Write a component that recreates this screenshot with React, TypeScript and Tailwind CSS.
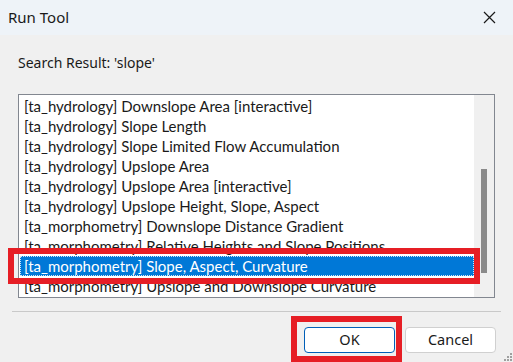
import React from 'react';

const font = { fontFamily: '"Noto Sans", "Open Sans", sans-serif' };
const listFont = { fontFamily: 'Lato, "Noto Sans", sans-serif' };

const items = [
  '[ta_hydrology] Downslope Area [interactive]',
  '[ta_hydrology] Slope Length',
  '[ta_hydrology] Slope Limited Flow Accumulation',
  '[ta_hydrology] Upslope Area',
  '[ta_hydrology] Upslope Area [interactive]',
  '[ta_hydrology] Upslope Height, Slope, Aspect',
  '[ta_morphometry] Downslope Distance Gradient',
  '[ta_morphometry] Relative Heights and Slope Positions',
  '[ta_morphometry] Slope, Aspect, Curvature',
  '[ta_morphometry] Upslope and Downslope Curvature',
];

const SELECTED = 8;

export default function App() {
  return (
    <div
      className="relative w-[513px] h-[362px] bg-[#f0f0f0] flex flex-col overflow-hidden text-[#1a1a1a]"
      style={font}
    >
      {/* title bar */}
      <div className="h-[35px] bg-[#eef3f8] flex items-center justify-between pl-[8px] pr-[17px] shrink-0">
        <span className="text-[15px]">Run Tool</span>
        <svg width="13" height="13" viewBox="0 0 13 13" className="text-[#1a1a1a]">
          <path d="M1 1 L12 12 M12 1 L1 12" stroke="currentColor" strokeWidth="1.2" />
        </svg>
      </div>

      <div className="px-[18px] pt-[18px] text-[14px] leading-[20px]">Search Result: 'slope'</div>

      {/* list box */}
      <div className="mx-[18px] mt-[21px] h-[204px] border border-[#828790] bg-white flex" style={listFont}>
        <div className="flex-1 overflow-hidden pl-[1px] pt-[1px]">
          {items.map((t, i) => (
            <div
              key={t}
              className={
                'h-[20px] leading-[20px] pl-[4px] text-[15px] whitespace-nowrap ' +
                (i === SELECTED ? 'bg-[#0078d7] text-white outline outline-1 outline-dotted outline-[#d0e4f7] -outline-offset-1' : '')
              }
            >
              {t}
            </div>
          ))}
        </div>
        <div className="w-[20px] bg-[#f0f0f0] relative shrink-0">
          <div className="absolute left-[7px] top-[74px] w-[6px] h-[104px] bg-[#8a8a8a]" />
        </div>
      </div>

      {/* separator */}
      <div className="mx-[12px] mt-[13px] h-px bg-[#c9c9c9]" />

      {/* buttons */}
      <div className="flex justify-end gap-[10px] pr-[17px] mt-[15px]">
        <button className="w-[91px] h-[26px] rounded-[4px] border border-[#005fb8] bg-white text-[14.5px]">
          OK
        </button>
        <button className="w-[91px] h-[26px] rounded-[4px] border border-[#d0d0d0] bg-white text-[14.5px]">
          Cancel
        </button>
      </div>

      {/* resize grip */}
      <svg className="absolute right-[1px] bottom-[1px]" width="8" height="8" viewBox="0 0 8 8">
        <rect x="6" y="0" width="2" height="2" fill="#a0a0a0" />
        <rect x="3" y="3" width="2" height="2" fill="#a0a0a0" />
        <rect x="6" y="3" width="2" height="2" fill="#a0a0a0" />
        <rect x="0" y="6" width="2" height="2" fill="#a0a0a0" />
        <rect x="3" y="6" width="2" height="2" fill="#a0a0a0" />
        <rect x="6" y="6" width="2" height="2" fill="#a0a0a0" />
      </svg>

      {/* red highlight overlays */}
      <div className="absolute left-[8px] top-[248px] w-[472px] h-[36px] border-[6px] border-[#e61e25]" />
      <div className="absolute left-[291px] top-[316px] w-[111px] h-[46px] border-[6px] border-[#e61e25]" />
    </div>
  );
}
